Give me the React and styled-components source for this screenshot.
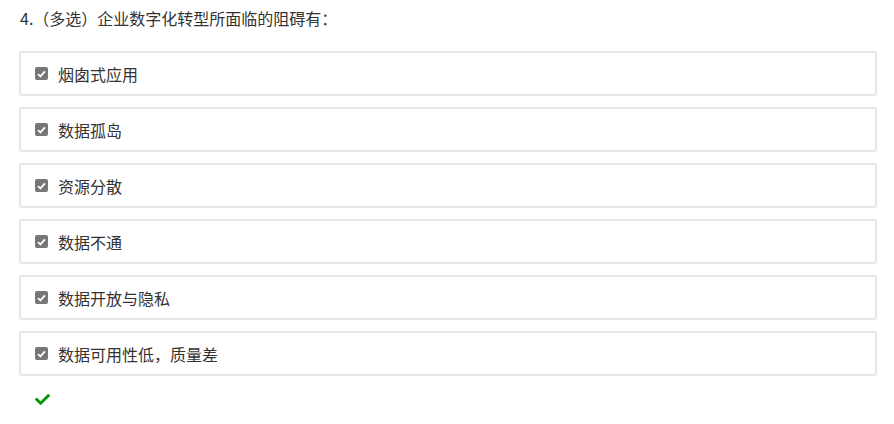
import React from 'react';
import styled, { createGlobalStyle } from 'styled-components';
import { FaCheck } from 'react-icons/fa';

const GlobalStyle = createGlobalStyle`
  body {
    margin: 0;
    background: #fff;
    font-family: "Microsoft YaHei", "Noto Sans CJK SC", "Liberation Sans", sans-serif;
  }
`;

const options = [
  '烟囱式应用',
  '数据孤岛',
  '资源分散',
  '数据不通',
  '数据开放与隐私',
  '数据可用性低，质量差',
];

export default function App() {
  return (
    <>
      <GlobalStyle />
      <StyledQuestion>
        <StyledTitle>4.（多选）企业数字化转型所面临的阻碍有：</StyledTitle>
        <StyledOptions>
          {options.map((text) => (
            <StyledOption key={text}>
              <StyledBox>
                <svg width="9" height="8" viewBox="0 0 9 8">
                  <path d="M1 4.2 L3.4 6.4 L8 1.4" fill="none" stroke="#fff" strokeWidth="1.8" />
                </svg>
              </StyledBox>
              <span>{text}</span>
            </StyledOption>
          ))}
        </StyledOptions>
        <StyledResult>
          <FaCheck />
        </StyledResult>
      </StyledQuestion>
    </>
  );
}

const StyledQuestion = styled.div`
  padding: 8px 17px 0 19px;
`;

const StyledTitle = styled.div`
  font-size: 16px;
  line-height: 20px;
  color: #333;
  padding-left: 1px;
`;

const StyledOptions = styled.div`
  margin-top: 23px;
  display: flex;
  flex-direction: column;
  gap: 11px;
`;

const StyledOption = styled.div`
  box-sizing: border-box;
  height: 45px;
  border: 2px solid #e6e6e6;
  border-radius: 3px;
  display: flex;
  align-items: center;
  gap: 10px;
  padding-left: 14px;
  font-size: 16px;
  color: #333;
`;

const StyledBox = styled.span`
  width: 13px;
  height: 13px;
  border-radius: 2px;
  background: #767676;
  display: flex;
  align-items: center;
  justify-content: center;
`;

const StyledResult = styled.div`
  margin-top: 16px;
  padding-left: 16px;
  color: #009a00;
  font-size: 15px;
  line-height: 15px;
`;
